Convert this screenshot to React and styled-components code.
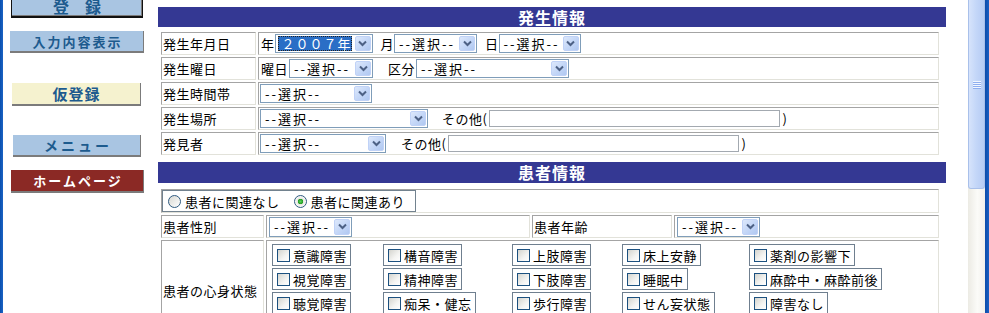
import React from "react";
import styled, { createGlobalStyle, css } from "styled-components";

const FONT = `"Noto Sans CJK JP", "Noto Sans CJK SC", sans-serif`;

const GlobalStyle = createGlobalStyle`
  *, *::before, *::after { box-sizing: border-box; }
  html, body { margin: 0; padding: 0; background: #fff; overflow: hidden; }
  body { font-family: ${FONT}; font-size: 13px; color: #000; }
`;

const Page = styled.div`
  display: flex;
  width: 989px;
  height: 313px;
  overflow: hidden;
  background: #fff;
`;

const Edge = styled.div`
  flex: none;
  width: ${(p) => p.$w}px;
  background: ${(p) => p.$bg};
`;

const Sidebar = styled.nav`
  flex: none;
  width: 155px;
  display: flex;
  flex-direction: column;
  align-items: flex-start;
`;

const NavButton = styled.button`
  flex: none;
  margin: ${(p) => p.$mt}px 0 0 ${(p) => p.$ml}px;
  width: ${(p) => p.$w}px;
  height: ${(p) => p.$h}px;
  padding: 0 0 0 ${(p) => p.$ls}px;
  background: ${(p) => p.$bg};
  color: ${(p) => p.$fg};
  font-family: ${FONT};
  font-weight: 700;
  font-size: ${(p) => p.$size}px;
  letter-spacing: ${(p) => p.$ls}px;
  border: none;
  border-right: 1px solid #7b7b7b;
  border-bottom: 2px solid #7b7b7b;
  display: flex;
  align-items: center;
  justify-content: center;
  white-space: pre;
  cursor: pointer;
  ${(p) =>
    p.$focused &&
    css`
      border: 1px solid #111;
      border-bottom-width: 2px;
      box-shadow: inset -1px -1px 0 #7b7b7b;
    `}
`;

const Main = styled.main`
  flex: none;
  width: 788px;
  margin-right: 22px;
  padding-top: 7px;
  display: flex;
  flex-direction: column;
`;

const SectionBar = styled.h2`
  margin: ${(p) => p.$mt}px 0 0;
  height: ${(p) => p.$h}px;
  background: #343893;
  color: #fff;
  font-family: ${FONT};
  font-weight: 700;
  font-size: 16px;
  line-height: ${(p) => p.$h}px;
  letter-spacing: 1px;
  text-align: center;
`;

const FormGrid = styled.div`
  margin-top: ${(p) => p.$mt}px;
  padding: 0 7px 0 3px;
  display: grid;
  grid-template-columns: ${(p) => p.$cols};
  column-gap: 2px;
  row-gap: 2px;
  align-items: stretch;
`;

const Cell = styled.div`
  grid-column: span ${(p) => p.$span || 1};
  min-height: ${(p) => p.$h || 23}px;
  border-style: solid;
  border-width: 1px;
  border-color: #a4a4a4 #e2e2da #e2e2da #a4a4a4;
  display: flex;
  align-items: ${(p) => (p.$top ? "flex-start" : "center")};
  padding: ${(p) => p.$pad || "0 0 0 1px"};
  font-size: 13px;
  letter-spacing: 0.5px;
  white-space: nowrap;
`;

const Txt = styled.span`
  flex: none;
  margin-left: ${(p) => p.$ml || 0}px;
`;

const SelectBox = styled.div`
  flex: none;
  margin-left: ${(p) => p.$ml || 0}px;
  width: ${(p) => p.$w}px;
  height: ${(p) => p.$h || 19}px;
  border: 1px solid #7f9db9;
  background: #fff;
  display: flex;
  align-items: center;
  padding-left: ${(p) => (p.$hl ? 2 : 4)}px;
`;

const SelectValue = styled.span`
  flex: 1;
  min-width: 0;
  font-size: 13px;
  letter-spacing: 2px;
  white-space: nowrap;
`;

const Highlight = styled.span`
  display: inline-block;
  background: #2a6ec6;
  color: #fff;
  outline: 1px dotted #222;
  outline-offset: -1px;
  padding: 0 0 0 4px;
  letter-spacing: 1px;
  line-height: 15px;
`;

const DropButton = styled.span`
  flex: none;
  width: 16px;
  height: ${(p) => p.$h}px;
  margin-right: 1px;
  border: 1px solid #c0d2f7;
  border-radius: 2px;
  background: linear-gradient(135deg, #dde8fb 0%, #c3d6f7 55%, #b0c8f1 100%);
  display: flex;
  align-items: center;
  justify-content: center;
`;

const TextInput = styled.input`
  flex: none;
  margin-left: ${(p) => p.$ml || 0}px;
  width: ${(p) => p.$w}px;
  height: 17px;
  border: 1px solid #a3a9b0;
  background: #fff;
  padding: 0;
`;

const RadioGroup = styled.div`
  display: inline-flex;
  align-items: center;
  height: 22px;
  border: 1px solid #72828f;
  padding: 0 10px 0 5px;
`;

const RadioItem = styled.label`
  display: inline-flex;
  align-items: center;
  gap: 4px;
  margin-left: ${(p) => p.$ml || 0}px;
  font-size: 13px;
  letter-spacing: 0.5px;
`;

const RadioCircle = styled.span`
  flex: none;
  width: 13px;
  height: 13px;
  border-radius: 50%;
  border: 1px solid #2f5a80;
  background: ${(p) =>
    p.$checked
      ? "radial-gradient(circle, #5cd45c 0, #1f9a1f 2.5px, #e6e6e0 3px, #fff 6px)"
      : "linear-gradient(135deg, #d8d8d2, #ffffff)"};
`;

const CheckGrid = styled.div`
  display: grid;
  grid-template-columns: 111px 129px 110px 127px auto;
  grid-auto-rows: 22px;
  row-gap: 2px;
`;

const CheckItem = styled.label`
  justify-self: start;
  display: inline-flex;
  align-items: center;
  gap: 3px;
  height: 22px;
  border: 1px solid #6f7f8f;
  padding: 0 3px 0 4px;
  font-size: 13px;
  letter-spacing: 0.5px;
  white-space: nowrap;
`;

const CheckBox = styled.span`
  flex: none;
  width: 13px;
  height: 13px;
  border: 1px solid #1c5180;
  background: linear-gradient(135deg, #d4d4ce 0%, #f4f4f2 60%, #ffffff 100%);
`;

const ScrollTrack = styled.div`
  flex: none;
  width: 17px;
  display: flex;
  flex-direction: column;
  background: linear-gradient(90deg, #ecebe4, #fbfbf8 55%, #f2f1ec);
`;

const ScrollThumb = styled.div`
  flex: none;
  height: 189px;
  border: 1px solid #a9c0ea;
  border-top: none;
  border-radius: 0 0 3px 3px;
  background: linear-gradient(90deg, #d6e3fb, #c3d6f8 50%, #b6ccf4);
  display: flex;
  flex-direction: column;
  align-items: center;
  justify-content: center;
  padding-bottom: 18px;
`;

const GripLine = styled.span`
  width: 8px;
  height: 1px;
  background: ${(p) => (p.$dark ? "#8eaef0" : "#f2f6fe")};
`;

const Chevron = () => (
  <svg width="9" height="7" viewBox="0 0 9 7">
    <path d="M1 1.5 L4.5 5 L8 1.5" fill="none" stroke="#4d6185" strokeWidth="2" />
  </svg>
);

const Select = ({ w, ml, h = 19, value = "--選択--", highlighted }) => (
  <SelectBox $w={w} $ml={ml} $h={h} $hl={highlighted}>
    <SelectValue>
      {highlighted ? <Highlight>{value}</Highlight> : value}
    </SelectValue>
    <DropButton $h={h - 4}>
      <Chevron />
    </DropButton>
  </SelectBox>
);

const Check = ({ children }) => (
  <CheckItem>
    <CheckBox />
    {children}
  </CheckItem>
);

const Radio = ({ checked, ml, children }) => (
  <RadioItem $ml={ml}>
    <RadioCircle $checked={checked} />
    {children}
  </RadioItem>
);

const conditions = [
  "意識障害", "構音障害", "上肢障害", "床上安静", "薬剤の影響下",
  "視覚障害", "精神障害", "下肢障害", "睡眠中", "麻酔中・麻酔前後",
  "聴覚障害", "痴呆・健忘", "歩行障害", "せん妄状態", "障害なし",
];

export default function App() {
  return (
    <>
      <GlobalStyle />
      <Page>
        <Edge $w={3} $bg="linear-gradient(90deg, #0a4fae, #1a63c4)" />
        <Sidebar>
          <NavButton $mt={-5} $ml={8} $w={132} $h={23} $bg="#a9c5e2" $fg="#1d5b8e" $size={16} $ls={0} $focused>
            登　録
          </NavButton>
          <NavButton $mt={13} $ml={7} $w={134} $h={22} $bg="#a9c5e2" $fg="#1d5b8e" $size={13} $ls={2}>
            入力内容表示
          </NavButton>
          <NavButton $mt={30} $ml={9} $w={129} $h={23} $bg="#f5f2cf" $fg="#1d5b8e" $size={15} $ls={1}>
            仮登録
          </NavButton>
          <NavButton $mt={29} $ml={10} $w={128} $h={22} $bg="#a9c5e2" $fg="#1d5b8e" $size={14} $ls={3}>
            メニュー
          </NavButton>
          <NavButton $mt={13} $ml={8} $w={133} $h={23} $bg="#8b2925" $fg="#ffffff" $size={13} $ls={2}>
            ホームページ
          </NavButton>
        </Sidebar>

        <Main>
          <SectionBar $mt={0} $h={20}>発生情報</SectionBar>
          <FormGrid $mt={5} $cols="95px 681px">
            <Cell>発生年月日</Cell>
            <Cell>
              <Txt $ml={1}>年</Txt>
              <Select w={98} value="２００７年" highlighted />
              <Txt $ml={8}>月</Txt>
              <Select w={83} />
              <Txt $ml={8}>日</Txt>
              <Select w={82} />
            </Cell>

            <Cell>発生曜日</Cell>
            <Cell>
              <Txt $ml={1}>曜日</Txt>
              <Select w={84} ml={1} />
              <Txt $ml={15}>区分</Txt>
              <Select w={153} ml={1} />
            </Cell>

            <Cell>発生時間帯</Cell>
            <Cell>
              <Select w={112} />
            </Cell>

            <Cell>発生場所</Cell>
            <Cell>
              <Select w={168} />
              <Txt $ml={14}>その他(</Txt>
              <TextInput $w={291} $ml={2} />
              <Txt $ml={2}>)</Txt>
            </Cell>

            <Cell>発見者</Cell>
            <Cell>
              <Select w={126} />
              <Txt $ml={15}>その他(</Txt>
              <TextInput $w={291} $ml={2} />
              <Txt $ml={2}>)</Txt>
            </Cell>
          </FormGrid>

          <SectionBar $mt={7} $h={21}>患者情報</SectionBar>
          <FormGrid $mt={6} $cols="103px 264px 140px 265px">
            <Cell $span={4} $h={24} $pad="0">
              <RadioGroup>
                <Radio>患者に関連なし</Radio>
                <Radio checked ml={14}>患者に関連あり</Radio>
              </RadioGroup>
            </Cell>

            <Cell>患者性別</Cell>
            <Cell $pad="0 0 0 2px">
              <Select w={83} h={20} />
            </Cell>
            <Cell>患者年齢</Cell>
            <Cell $pad="0 0 0 2px">
              <Select w={83} h={20} />
            </Cell>

            <Cell $h={100}>患者の心身状態</Cell>
            <Cell $span={3} $h={100} $top $pad="3px 0 0 5px">
              <CheckGrid>
                {conditions.map((c) => (
                  <Check key={c}>{c}</Check>
                ))}
              </CheckGrid>
            </Cell>
          </FormGrid>
        </Main>

        <ScrollTrack>
          <ScrollThumb>
            {[0, 1, 2, 3, 4, 5, 6, 7].map((i) => (
              <GripLine key={i} $dark={i % 2 === 1} />
            ))}
          </ScrollThumb>
        </ScrollTrack>
        <Edge $w={4} $bg="linear-gradient(90deg, #0c4caa, #1a5fc2)" />
      </Page>
    </>
  );
}
